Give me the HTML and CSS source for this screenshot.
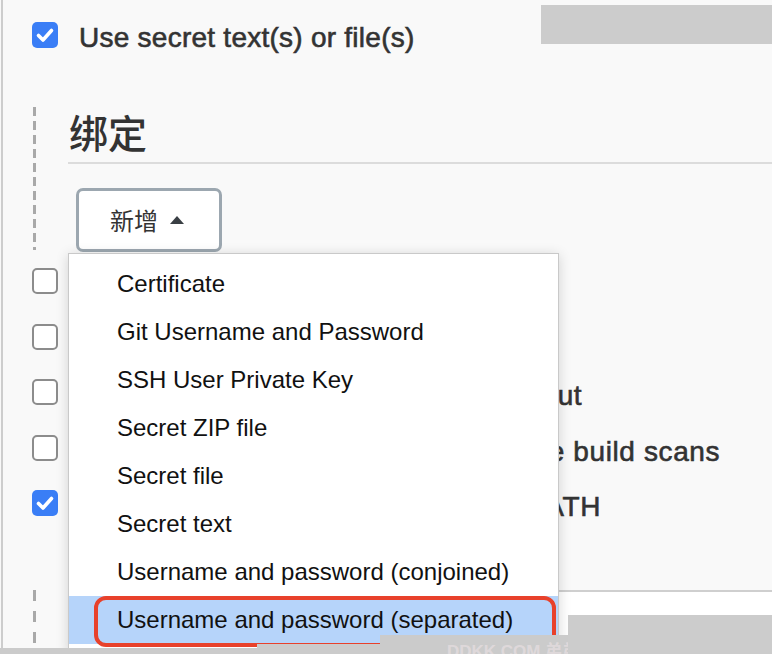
FILE: index.html
```html
<!DOCTYPE html>
<html lang="zh">
<head>
<meta charset="utf-8">
<title>Bindings</title>
<link rel="stylesheet" href="styles.css">
</head>
<body>
<div class="page">
  <div class="row top-row">
    <span class="cb checked"><svg viewBox="0 0 26 26" width="26" height="26"><path d="M6.5 13.5 L11 18 L19.5 8.5" fill="none" stroke="#fff" stroke-width="3.6" stroke-linecap="round" stroke-linejoin="round"/></svg></span>
    <span class="label">Use secret text(s) or file(s)</span>
  </div>
  <div class="nested nested-a">
    <div class="heading">绑定</div>
    <button class="add-btn" type="button"><span class="btn-text">新增</span><span class="caret"></span></button>
  </div>
  <div class="rows">
    <div class="row item-row"><span class="cb"></span><span class="label">Abort the build if stuck</span></div>
    <div class="row item-row"><span class="cb"></span><span class="label">Terminate a build</span></div>
    <div class="row item-row"><span class="cb"></span><span class="label">Add timestamps to the Console Output</span></div>
    <div class="row item-row"><span class="cb"></span><span class="label">Inspect build log for published Gradle build scans</span></div>
    <div class="row item-row"><span class="cb checked"><svg viewBox="0 0 26 26" width="26" height="26"><path d="M6.5 13.5 L11 18 L19.5 8.5" fill="none" stroke="#fff" stroke-width="3.6" stroke-linecap="round" stroke-linejoin="round"/></svg></span><span class="label">Provide Node &amp; npm bin/ folder to PATH</span></div>
  </div>
  <div class="nested nested-b">
    <div class="field"></div>
  </div>
</div>

<ul class="menu">
  <li>Certificate</li>
  <li>Git Username and Password</li>
  <li>SSH User Private Key</li>
  <li>Secret ZIP file</li>
  <li>Secret file</li>
  <li>Secret text</li>
  <li>Username and password (conjoined)</li>
  <li class="active">Username and password (separated)</li>
</ul>
<div class="mark-box"></div>
<div class="redact redact-top"></div>
<div class="redact redact-bottom"></div>
<div class="band band-full"></div>
<div class="band band-mid"></div>
<div class="band band-wm"><span class="wm-text">DDKK.COM 弟弟快看</span></div>
</body>
</html>
```

FILE: styles.css
```css
html, body {
  margin: 0;
  padding: 0;
}
body {
  position: relative;
  width: 772px;
  height: 654px;
  overflow: hidden;
  background: #f9f9f9;
  font-family: "Liberation Sans", Arial, "Noto Sans CJK SC", sans-serif;
  color: #333;
}
.page {
  margin-left: 1px;
  border-left: 2px solid #cdcdcd;
  height: 654px;
  box-sizing: border-box;
  overflow: hidden;
}
.row {
  display: flex;
  align-items: flex-start;
  gap: 21px;
}
.top-row {
  padding: 22px 0 0 29px;
}
.cb {
  flex: none;
  width: 26px;
  height: 26px;
  box-sizing: border-box;
  border: 2px solid #8c8c8c;
  border-radius: 5px;
  background: #fff;
  display: flex;
}
.cb.checked {
  border: none;
  background: #3a7ef6;
}
.label {
  font-size: 28px;
  font-weight: normal;
  line-height: 32px;
  letter-spacing: 0.25px;
  -webkit-text-stroke: 0.6px #333;
  white-space: nowrap;
  color: #333;
}
.nested {
  margin-left: 30px;
  padding-left: 35px;
  background-image: repeating-linear-gradient(to bottom, #a9a9a9 0 9px, transparent 9px 14px);
  background-size: 3px 100%;
  background-repeat: no-repeat;
  background-position: 0 0;
}
.nested-a {
  margin-top: 53px;
  padding-bottom: 1px;
  background-size: 3px 143px;
}
.heading {
  font-family: "Noto Sans CJK SC", "Liberation Sans", sans-serif;
  font-size: 39px;
  font-weight: 500;
  line-height: 48px;
  color: #333;
  padding-bottom: 7px;
  padding-left: 1px;
  border-bottom: 2px solid #dcdcdc;
}
.add-btn {
  margin: 24px 0 0 8px;
  width: 146px;
  height: 64px;
  box-sizing: border-box;
  border: 3px solid #9ca7b0;
  border-radius: 7px;
  background: #fff;
  display: flex;
  align-items: center;
  padding: 0 0 0 31px;
  gap: 12px;
  font-family: "Noto Sans CJK SC", sans-serif;
  font-size: 24px;
  color: #333;
}
.btn-text {
  line-height: 30px;
}
.caret {
  width: 0;
  height: 0;
  border-left: 7.5px solid transparent;
  border-right: 7.5px solid transparent;
  border-bottom: 8px solid #3a3f44;
  margin-top: -1px;
}
.rows {
  padding-left: 29px;
}
.item-row {
  height: 55.5px;
  box-sizing: border-box;
  padding-top: 15px;
}
.item-row .label {
  margin-top: 1px;
  letter-spacing: 0.62px;
}
.nested-b {
  margin-top: 6.5px;
  height: 117px;
  background-image: repeating-linear-gradient(to bottom, #a9a9a9 0 11px, transparent 11px 21px);
}
.field {
  margin-top: 59px;
  height: 58px;
  background: #fff;
  border-top: 2px solid #cfcfcf;
}
.menu {
  position: absolute;
  left: 68px;
  top: 253px;
  width: 491px;
  height: 401px;
  box-sizing: border-box;
  margin: 0;
  padding: 6px 0 0 0;
  list-style: none;
  background: #fff;
  border: 1px solid #c9c9c9;
  border-bottom: none;
  box-shadow: 0 2px 12px rgba(0, 0, 0, 0.16);
  z-index: 2;
}
.menu li {
  height: 48px;
  line-height: 48px;
  padding-left: 48px;
  font-size: 24px;
  color: #111;
  white-space: nowrap;
}
.menu li.active {
  background: #b6d4fa;
}
.mark-box {
  position: absolute;
  left: 94px;
  top: 596px;
  width: 462px;
  height: 51px;
  box-sizing: border-box;
  border: 4px solid #e8412b;
  border-radius: 12px;
  z-index: 4;
}
.redact {
  position: absolute;
  background: #cccccc;
  z-index: 5;
}
.redact-top {
  left: 541px;
  top: 5px;
  width: 231px;
  height: 39px;
}
.redact-bottom {
  left: 568px;
  top: 615px;
  width: 204px;
  height: 39px;
}
.band {
  position: absolute;
  background: #cbcbcb;
}
.band-full {
  left: 0;
  top: 648px;
  width: 772px;
  height: 6px;
  z-index: 3;
}
.band-mid {
  left: 257px;
  top: 644px;
  width: 123px;
  height: 10px;
  z-index: 5;
}
.band-wm {
  left: 380px;
  top: 635px;
  width: 188px;
  height: 19px;
  z-index: 5;
  overflow: hidden;
}
.wm-text {
  position: absolute;
  left: 67px;
  top: 2px;
  font-family: "Liberation Sans", "Noto Sans CJK SC", sans-serif;
  font-size: 17px;
  font-weight: bold;
  color: rgba(255, 240, 244, 0.4);
  white-space: nowrap;
}
```
